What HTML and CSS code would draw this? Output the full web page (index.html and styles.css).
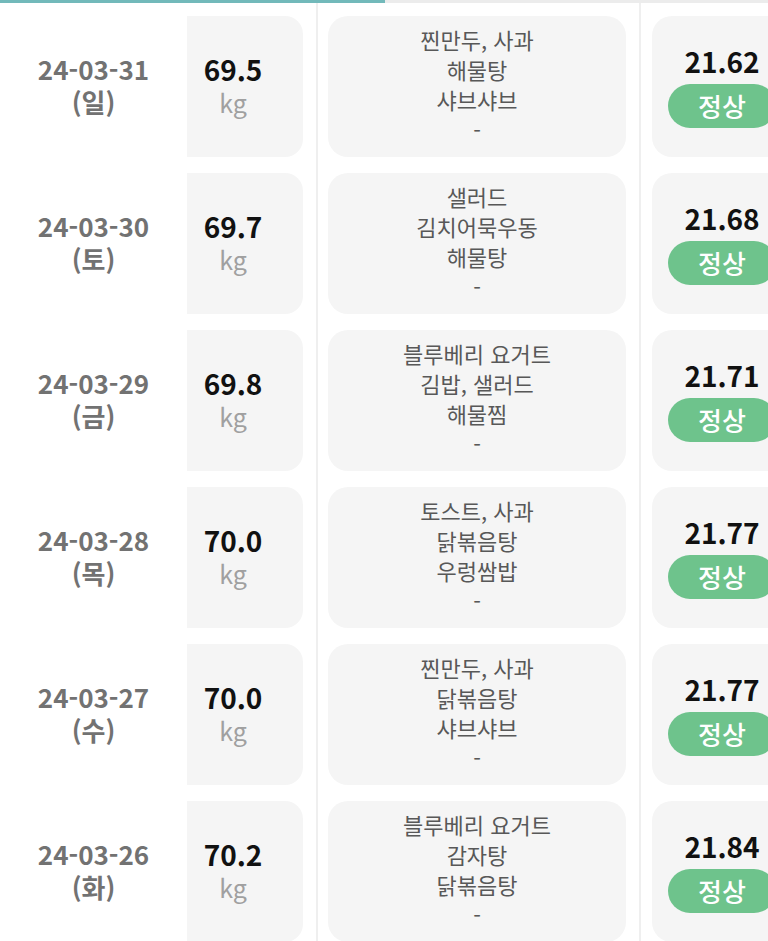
FILE: index.html
```html
<!DOCTYPE html>
<html lang="ko">
<head>
<meta charset="utf-8">
<link rel="stylesheet" href="styles.css">
</head>
<body>
<div class="page">
  <div class="progress"><div class="progress-fill"></div></div>
  <div class="list">
    <div class="row">
      <div class="date"><div>24-03-31</div><div>(일)</div></div>
      <div class="weight-cell"><div class="card weight"><div class="num">69.5</div><div class="unit">kg</div></div></div>
      <div class="meal-cell"><div class="card meal"><div>찐만두, 사과</div><div>해물탕</div><div>샤브샤브</div><div>-</div></div></div>
      <div class="bmi-cell"><div class="card bmi"><div class="bmi-num">21.62</div><div class="pill">정상</div></div></div>
    </div>
    <div class="row">
      <div class="date"><div>24-03-30</div><div>(토)</div></div>
      <div class="weight-cell"><div class="card weight"><div class="num">69.7</div><div class="unit">kg</div></div></div>
      <div class="meal-cell"><div class="card meal"><div>샐러드</div><div>김치어묵우동</div><div>해물탕</div><div>-</div></div></div>
      <div class="bmi-cell"><div class="card bmi"><div class="bmi-num">21.68</div><div class="pill">정상</div></div></div>
    </div>
    <div class="row">
      <div class="date"><div>24-03-29</div><div>(금)</div></div>
      <div class="weight-cell"><div class="card weight"><div class="num">69.8</div><div class="unit">kg</div></div></div>
      <div class="meal-cell"><div class="card meal"><div>블루베리 요거트</div><div>김밥, 샐러드</div><div>해물찜</div><div>-</div></div></div>
      <div class="bmi-cell"><div class="card bmi"><div class="bmi-num">21.71</div><div class="pill">정상</div></div></div>
    </div>
    <div class="row">
      <div class="date"><div>24-03-28</div><div>(목)</div></div>
      <div class="weight-cell"><div class="card weight"><div class="num">70.0</div><div class="unit">kg</div></div></div>
      <div class="meal-cell"><div class="card meal"><div>토스트, 사과</div><div>닭볶음탕</div><div>우렁쌈밥</div><div>-</div></div></div>
      <div class="bmi-cell"><div class="card bmi"><div class="bmi-num">21.77</div><div class="pill">정상</div></div></div>
    </div>
    <div class="row">
      <div class="date"><div>24-03-27</div><div>(수)</div></div>
      <div class="weight-cell"><div class="card weight"><div class="num">70.0</div><div class="unit">kg</div></div></div>
      <div class="meal-cell"><div class="card meal"><div>찐만두, 사과</div><div>닭볶음탕</div><div>샤브샤브</div><div>-</div></div></div>
      <div class="bmi-cell"><div class="card bmi"><div class="bmi-num">21.77</div><div class="pill">정상</div></div></div>
    </div>
    <div class="row">
      <div class="date"><div>24-03-26</div><div>(화)</div></div>
      <div class="weight-cell"><div class="card weight"><div class="num">70.2</div><div class="unit">kg</div></div></div>
      <div class="meal-cell"><div class="card meal"><div>블루베리 요거트</div><div>감자탕</div><div>닭볶음탕</div><div>-</div></div></div>
      <div class="bmi-cell"><div class="card bmi"><div class="bmi-num">21.84</div><div class="pill">정상</div></div></div>
    </div>
  </div>
</div>
</body>
</html>
```

FILE: styles.css
```css
html, body {
  margin: 0;
  padding: 0;
  background: #ffffff;
  overflow: hidden;
}
body {
  font-family: "Noto Sans CJK KR", "Noto Sans", sans-serif;
}
.page {
  width: 792px;
}
.progress {
  height: 3px;
  background: #ececec;
}
.progress-fill {
  width: 385px;
  height: 3px;
  background: #72b9ba;
}
.list {
  display: flex;
  flex-direction: column;
}
.row {
  display: flex;
  padding: 8px 0;
  height: 141px;
}
.row:first-child {
  padding-top: 13px;
}
.row:last-child {
  padding-bottom: 40px;
}
.date {
  width: 187px;
  box-sizing: border-box;
  padding-bottom: 3px;
  display: flex;
  flex-direction: column;
  justify-content: center;
  align-items: center;
  font-size: 26px;
  font-weight: 700;
  line-height: 33px;
  color: #727272;
}
.weight-cell {
  width: 116px;
  padding-right: 13px;
}
.card {
  background: #f5f5f5;
  height: 141px;
  box-sizing: border-box;
  display: flex;
  flex-direction: column;
  justify-content: center;
  align-items: center;
}
.weight {
  border-radius: 0 18px 18px 0;
  padding: 0 24px 4px 0;
}
.num {
  font-size: 28px;
  font-weight: 700;
  line-height: 34px;
  color: #111;
}
.unit {
  font-size: 25px;
  line-height: 32px;
  color: #a0a0a0;
}
.meal-cell {
  border-left: 2px solid #efefef;
  padding: 8px 13px 8px 10px;
  margin-top: -8px;
  margin-bottom: -8px;
}
.row:first-child .meal-cell,
.row:first-child .bmi-cell {
  margin-top: -13px;
  padding-top: 13px;
}
.meal {
  width: 298px;
  border-radius: 20px;
  padding-bottom: 6px;
  font-size: 22px;
  line-height: 30px;
  color: #585858;
}
.bmi-cell {
  border-left: 2px solid #efefef;
  padding: 8px 0 8px 11px;
  margin-top: -8px;
  margin-bottom: -8px;
}
.bmi {
  width: 140px;
  border-radius: 20px 0 0 20px;
  padding: 0 16px 2px;
  align-items: stretch;
  text-align: center;
}
.bmi-num {
  font-size: 28px;
  font-weight: 700;
  line-height: 36px;
  color: #111;
  margin-bottom: 5px;
}
.pill {
  height: 44px;
  border-radius: 22px;
  background: #6ec38c;
  color: #fff;
  font-size: 26px;
  font-weight: 500;
  line-height: 44px;
}
```
